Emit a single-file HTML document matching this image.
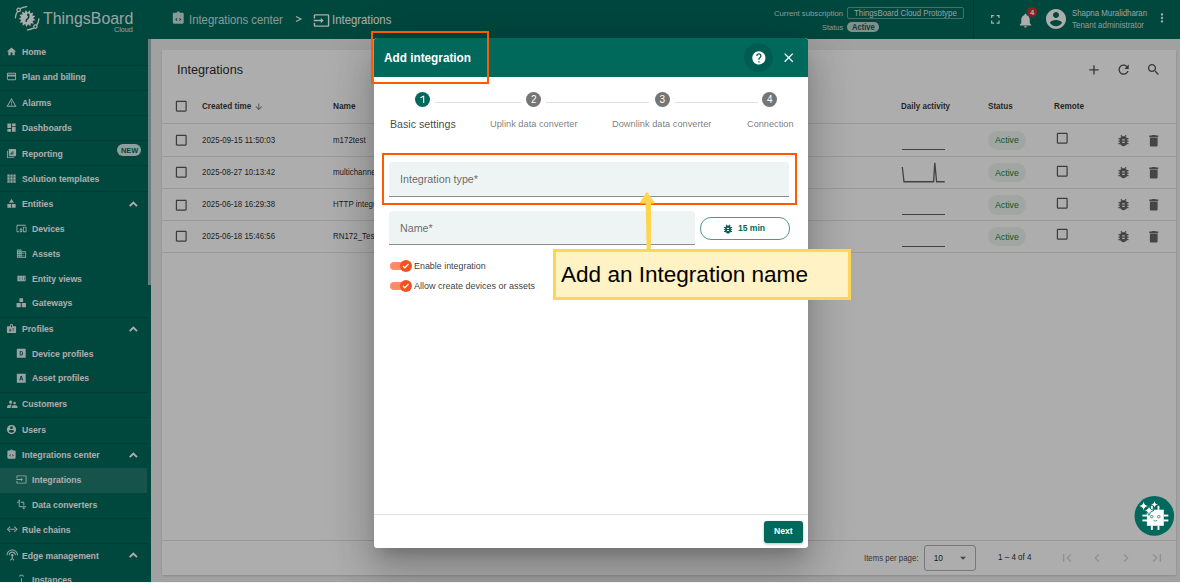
<!DOCTYPE html>
<html><head><meta charset="utf-8"><style>
html,body{margin:0;padding:0}
body{width:1180px;height:583px;overflow:hidden;position:relative;font-family:"Liberation Sans",sans-serif;background:#eee}
.t{position:absolute;white-space:nowrap;line-height:1}
.i{position:absolute;overflow:visible}
</style></head><body>
<div style="position:absolute;left:0;top:0;width:1180px;height:38.5px;background:#00695c"></div>
<svg class="i" style="left:12px;top:3px;width:32px;height:32px" viewBox="12 3 32 32"><g fill="none" stroke="#fff" stroke-width="1.3" stroke-linecap="round"><path d="M15.4 17.8 Q15.8 13.5 17.6 11.4"/><circle cx="18.7" cy="9.9" r="1.7"/><path d="M20.3 8.5 Q23 7 26.8 6.6"/><path d="M38.9 18.9 Q38.5 23 36.6 25.1"/><circle cx="35.4" cy="26.6" r="1.7"/><path d="M33.6 28.2 Q30.5 29.6 27.4 29.9"/></g><path fill="#fff" d="M35.53,20.11 L32.52,20.96 L33.77,23.83 L30.71,23.19 L30.48,26.31 L28.07,24.32 L26.42,26.97 L25.21,24.09 L22.51,25.67 L22.78,22.56 L19.66,22.71 L21.34,20.08 L18.51,18.76 L21.22,17.21 L19.33,14.72 L22.45,14.61 L21.92,11.53 L24.74,12.88 L25.71,9.91 L27.57,12.42 L29.81,10.24 L30.30,13.32 L33.29,12.43 L32.29,15.39 L35.36,16.00 L33.09,18.15Z"/><circle cx="28.3" cy="14.9" r="1.3" fill="#00695c"/><path d="M28.4 15.5 Q29.5 17.5 27.5 18.8 Q25.6 20 26.3 22" fill="none" stroke="#00695c" stroke-width="1.4"/></svg>
<div class="t" style="left:42.70px;top:11.00px;font-size:16.60px;color:rgba(255,255,255,.92);font-weight:normal;transform:scaleX(0.9595);transform-origin:0 0;">ThingsBoard</div>
<div class="t" style="left:114.20px;top:26.00px;font-size:7.60px;color:rgba(255,255,255,.9);font-weight:normal;transform:scaleX(0.9468);transform-origin:0 0;">Cloud</div>
<svg class="i" style="left:171.20px;top:11.30px;width:14.50px;height:14.50px;" viewBox="0 0 24 24"><path fill="rgba(255,255,255,.8)" d="M19 3h-4.18C14.4 1.84 13.3 1 12 1s-2.4.84-2.82 2H5c-1.1 0-2 .9-2 2v14c0 1.1.9 2 2 2h14c1.1 0 2-.9 2-2V5c0-1.1-.9-2-2-2zM9.5 16.5L7 14l2.5-2.5 1.06 1.06L9.12 14l1.44 1.44L9.5 16.5zm5 0l-1.06-1.06L14.88 14l-1.44-1.44L14.5 11.5 17 14l-2.5 2.5z"/></svg>
<div class="t" style="left:189.00px;top:15.00px;font-size:11.90px;color:rgba(255,255,255,.82);font-weight:normal;transform:scaleX(0.9528);transform-origin:0 0;">Integrations center</div>
<svg class="i" style="left:295px;top:16px;width:7px;height:6px" viewBox="0 0 7 6"><path d="M1 0.6 L6 3 L1 5.4" fill="none" stroke="#fff" stroke-width="1.1"/></svg>
<svg class="i" style="left:312.80px;top:11.60px;width:17.00px;height:17.00px;" viewBox="0 0 24 24"><path fill="#fff" d="M21 3.01H3c-1.1 0-2 .9-2 2V9h2V4.99h18v14.03H3V15H1v4.01c0 1.1.9 1.98 2 1.98h18c1.1 0 2-.88 2-1.98v-14c0-1.11-.9-2-2-2zM11 16l4-4-4-4v3H1v2h10v3z"/></svg>
<div class="t" style="left:332.00px;top:15.00px;font-size:11.90px;color:#fff;font-weight:normal;transform:scaleX(0.9553);transform-origin:0 0;">Integrations</div>
<div class="t" style="left:774.00px;top:10.00px;font-size:8.00px;color:rgba(255,255,255,.82);font-weight:normal;transform:scaleX(0.9639);transform-origin:0 0;">Current subscription</div>
<div style="position:absolute;left:847px;top:7px;width:114.8px;height:10.2px;border:1px solid rgba(255,255,255,.4);border-radius:2px"></div>
<div class="t" style="left:854.10px;top:10.00px;font-size:8.20px;color:rgba(255,255,255,.88);font-weight:normal;transform:scaleX(0.9566);transform-origin:0 0;">ThingsBoard Cloud Prototype</div>
<div class="t" style="left:821.50px;top:24.00px;font-size:8.00px;color:rgba(255,255,255,.82);font-weight:normal;transform:scaleX(0.9304);transform-origin:0 0;">Status</div>
<div style="position:absolute;left:847px;top:22.4px;width:31.8px;height:9.6px;border-radius:4.8px;background:rgba(255,255,255,.72)"></div>
<div class="t" style="left:851.60px;top:24.00px;font-size:8.20px;color:#24544d;font-weight:bold;transform:scaleX(0.9264);transform-origin:0 0;">Active</div>
<div style="position:absolute;left:973.3px;top:0;width:1px;height:38.5px;background:rgba(0,0,0,.15)"></div>
<svg class="i" style="left:987.50px;top:12.30px;width:14.70px;height:14.70px;" viewBox="0 0 24 24"><path fill="#fff" d="M7 14H5v5h5v-2H7v-3zm-2-4h2V7h3V5H5v5zm12 7h-3v2h5v-5h-2v3zM14 5v2h3v3h2V5h-5z"/></svg>
<svg class="i" style="left:1016.50px;top:11.50px;width:17.00px;height:17.00px;" viewBox="0 0 24 24"><path fill="#fff" d="M12 22c1.1 0 2-.9 2-2h-4c0 1.1.89 2 2 2zm6-6v-5c0-3.07-1.64-5.64-4.5-6.32V4c0-.83-.67-1.5-1.5-1.5s-1.5.67-1.5 1.5v.68C7.63 5.36 6 7.92 6 11v5l-2 2v1h16v-1l-2-2z"/></svg>
<div style="position:absolute;left:1027.4px;top:7.1px;width:9.6px;height:9.6px;border-radius:50%;background:#d32f2f"></div>
<div class="t" style="left:1030.30px;top:9.00px;font-size:7.20px;color:#fff;font-weight:bold;">4</div>
<svg class="i" style="left:1043.70px;top:7.10px;width:24.00px;height:24.00px;" viewBox="0 0 24 24"><path fill="#fff" d="M12 2C6.48 2 2 6.48 2 12s4.48 10 10 10 10-4.48 10-10S17.52 2 12 2zm0 3c1.66 0 3 1.34 3 3s-1.34 3-3 3-3-1.34-3-3 1.34-3 3-3zm0 14.2c-2.5 0-4.71-1.28-6-3.22.03-1.99 4-3.08 6-3.08 1.99 0 5.97 1.09 6 3.08-1.29 1.94-3.5 3.22-6 3.22z"/></svg>
<div class="t" style="left:1071.80px;top:10.00px;font-size:8.20px;color:rgba(255,255,255,.9);font-weight:normal;transform:scaleX(0.9592);transform-origin:0 0;">Shapna Muralidharan</div>
<div class="t" style="left:1072.30px;top:22.00px;font-size:8.20px;color:rgba(255,255,255,.82);font-weight:normal;transform:scaleX(0.9706);transform-origin:0 0;">Tenant administrator</div>
<svg class="i" style="left:1154.80px;top:11.30px;width:14.00px;height:14.00px;" viewBox="0 0 24 24"><path fill="#fff" d="M12 8c1.1 0 2-.9 2-2s-.9-2-2-2-2 .9-2 2 .9 2 2 2zm0 2c-1.1 0-2 .9-2 2s.9 2 2 2 2-.9 2-2-.9-2-2-2zm0 6c-1.1 0-2 .9-2 2s.9 2 2 2 2-.9 2-2-.9-2-2-2z"/></svg>
<div style="position:absolute;left:0;top:38.5px;width:151px;height:545px;background:#00695c"></div>
<div style="position:absolute;left:147.5px;top:38.5px;width:3.5px;height:246px;background:rgb(157,187,181)"></div>
<svg class="i" style="left:6.30px;top:46.20px;width:11.00px;height:11.00px;" viewBox="0 0 24 24"><path fill="rgba(255,255,255,.9)" d="M10 20v-6h4v6h5v-8h3L12 3 2 12h3v8z"/></svg>
<div class="t" style="left:22.30px;top:47.00px;font-size:9.50px;color:#fff;font-weight:bold;transform:scaleX(0.9089);transform-origin:0 0;">Home</div>
<div style="position:absolute;left:0;top:64.50px;width:147.5px;height:1px;background:rgba(0,0,0,.14)"></div>
<svg class="i" style="left:6.30px;top:71.20px;width:11.00px;height:11.00px;" viewBox="0 0 24 24"><path fill="rgba(255,255,255,.9)" d="M20 4H4c-1.11 0-1.99.89-1.99 2L2 18c0 1.11.89 2 2 2h16c1.11 0 2-.89 2-2V6c0-1.11-.89-2-2-2zm0 14H4v-6h16v6zm0-10H4V6h16v2z"/></svg>
<div class="t" style="left:22.30px;top:72.00px;font-size:9.50px;color:#fff;font-weight:bold;transform:scaleX(0.9089);transform-origin:0 0;">Plan and billing</div>
<div style="position:absolute;left:0;top:89.70px;width:147.5px;height:1px;background:rgba(0,0,0,.14)"></div>
<svg class="i" style="left:6.30px;top:96.80px;width:11.00px;height:11.00px;" viewBox="0 0 24 24"><path fill="rgba(255,255,255,.9)" d="M12 5.99L19.53 19H4.47L12 5.99M12 2L1 21h22L12 2zm1 14h-2v2h2v-2zm0-6h-2v4h2v-4z"/></svg>
<div class="t" style="left:22.30px;top:98.00px;font-size:9.50px;color:#fff;font-weight:bold;transform:scaleX(0.9089);transform-origin:0 0;">Alarms</div>
<div style="position:absolute;left:0;top:114.90px;width:147.5px;height:1px;background:rgba(0,0,0,.14)"></div>
<svg class="i" style="left:6.30px;top:122.00px;width:11.00px;height:11.00px;" viewBox="0 0 24 24"><path fill="rgba(255,255,255,.9)" d="M3 13h8V3H3v10zm0 8h8v-6H3v6zm10 0h8V11h-8v10zm0-18v6h8V3h-8z"/></svg>
<div class="t" style="left:22.30px;top:123.00px;font-size:9.50px;color:#fff;font-weight:bold;transform:scaleX(0.9089);transform-origin:0 0;">Dashboards</div>
<div style="position:absolute;left:0;top:140.10px;width:147.5px;height:1px;background:rgba(0,0,0,.14)"></div>
<svg class="i" style="left:6.30px;top:147.80px;width:11.00px;height:11.00px;" viewBox="0 0 24 24"><path fill="rgba(255,255,255,.9)" fill-rule="evenodd" d="M4 6H2v14c0 1.1.9 2 2 2h14v-2H4V6zM20 2H8c-1.1 0-2 .9-2 2v12c0 1.1.9 2 2 2h12c1.1 0 2-.9 2-2V4c0-1.1-.9-2-2-2zM14 7h2v7h-2zM11 10h2v4h-2zM8 12h2v2H8z"/></svg>
<div class="t" style="left:22.30px;top:149.00px;font-size:9.50px;color:#fff;font-weight:bold;transform:scaleX(0.9089);transform-origin:0 0;">Reporting</div>
<div style="position:absolute;left:117px;top:143.9px;width:24.3px;height:12.6px;border-radius:6.3px;background:rgba(255,255,255,.85)"></div>
<div class="t" style="left:120.50px;top:147.00px;font-size:7.60px;color:#00695c;font-weight:bold;transform:scaleX(0.9700);transform-origin:0 0;">NEW</div>
<div style="position:absolute;left:0;top:165.30px;width:147.5px;height:1px;background:rgba(0,0,0,.14)"></div>
<svg class="i" style="left:6.30px;top:173.00px;width:11.00px;height:11.00px;" viewBox="0 0 24 24"><path fill="rgba(255,255,255,.9)" d="M3 3h5v5H3zM9.5 3h5v5h-5zM16 3h5v5h-5zM3 9.5h5v5H3zM9.5 9.5h5v5h-5zM16 9.5h5v5h-5zM3 16h5v5H3zM9.5 16h5v5h-5zM16 16h5v5h-5z"/></svg>
<div class="t" style="left:22.30px;top:174.00px;font-size:9.50px;color:#fff;font-weight:bold;transform:scaleX(0.9089);transform-origin:0 0;">Solution templates</div>
<div style="position:absolute;left:0;top:190.50px;width:147.5px;height:1px;background:rgba(0,0,0,.14)"></div>
<svg class="i" style="left:6.30px;top:198.40px;width:11.00px;height:11.00px;" viewBox="0 0 24 24"><path fill="rgba(255,255,255,.9)" d="M12 2l-5.5 8.5h11zM3 13h8.2v8H3zM12.8 13H21v8h-8.2z"/></svg>
<div class="t" style="left:22.30px;top:199.00px;font-size:9.50px;color:#fff;font-weight:bold;transform:scaleX(0.9089);transform-origin:0 0;">Entities</div>
<svg class="i" style="left:125px;top:195.90px;width:16px;height:16px" viewBox="0 0 16 16"><path d="M4.7 10.2 L8.35 6.5 L12 10.2" fill="none" stroke="#fff" stroke-width="1.9"/></svg>
<svg class="i" style="left:15.80px;top:223.20px;width:11.00px;height:11.00px;" viewBox="0 0 24 24"><path fill="rgba(255,255,255,.9)" d="M3 6h18V4H3c-1.1 0-2 .9-2 2v12c0 1.1.9 2 2 2h4v-2H3V6zm10 6H9v1.78c-.61.55-1 1.33-1 2.22s.39 1.67 1 2.22V20h4v-1.78c.61-.55 1-1.34 1-2.22s-.39-1.67-1-2.22V12zm-2 5.5c-.83 0-1.5-.67-1.5-1.5s.67-1.5 1.5-1.5 1.5.67 1.5 1.5-.67 1.5-1.5 1.5zM22 8h-6c-.5 0-1 .5-1 1v10c0 .5.5 1 1 1h6c.5 0 1-.5 1-1V9c0-.5-.5-1-1-1zm-1 10h-4v-8h4v8z"/></svg>
<div class="t" style="left:32.00px;top:224.00px;font-size:9.50px;color:#fff;font-weight:bold;transform:scaleX(0.9089);transform-origin:0 0;">Devices</div>
<svg class="i" style="left:15.80px;top:248.00px;width:11.00px;height:11.00px;" viewBox="0 0 24 24"><path fill="rgba(255,255,255,.9)" d="M12 7V3H2v18h20V7H12zM6 19H4v-2h2v2zm0-4H4v-2h2v2zm0-4H4V9h2v2zm0-4H4V5h2v2zm4 12H8v-2h2v2zm0-4H8v-2h2v2zm0-4H8V9h2v2zm0-4H8V5h2v2zm10 12h-8v-2h2v-2h-2v-2h2v-2h-2V9h8v10zm-2-8h-2v2h2v-2zm0 4h-2v2h2v-2z"/></svg>
<div class="t" style="left:32.00px;top:249.00px;font-size:9.50px;color:#fff;font-weight:bold;transform:scaleX(0.9089);transform-origin:0 0;">Assets</div>
<svg class="i" style="left:15.80px;top:273.00px;width:11.00px;height:11.00px;" viewBox="0 0 24 24"><path fill="rgba(255,255,255,.9)" d="M3 6h18v12H3zM8 8v8h1V8zm5 0v8h1V8zm5 0v8h1V8z"/></svg>
<div class="t" style="left:32.00px;top:274.00px;font-size:9.50px;color:#fff;font-weight:bold;transform:scaleX(0.9089);transform-origin:0 0;">Entity views</div>
<svg class="i" style="left:15.05px;top:296.85px;width:12.50px;height:12.50px;" viewBox="0 0 24 24"><path fill="rgba(255,255,255,.9)" d="M8.5 2.5h7v7h-7zM3 11.5h8v8H3zM13 11.5h8v8h-8z"/></svg>
<div class="t" style="left:32.00px;top:298.00px;font-size:9.50px;color:#fff;font-weight:bold;transform:scaleX(0.9089);transform-origin:0 0;">Gateways</div>
<div style="position:absolute;left:0;top:316.50px;width:147.5px;height:1px;background:rgba(0,0,0,.14)"></div>
<svg class="i" style="left:6.30px;top:323.00px;width:11.00px;height:11.00px;" viewBox="0 0 24 24"><path fill="rgba(255,255,255,.9)" d="M20 7h-5V4c0-1.1-.9-2-2-2h-2c-1.1 0-2 .9-2 2v3H4c-1.1 0-2 .9-2 2v11c0 1.1.9 2 2 2h16c1.1 0 2-.9 2-2V9c0-1.1-.9-2-2-2zM9 12c.83 0 1.5.67 1.5 1.5S9.83 15 9 15s-1.5-.67-1.5-1.5S8.17 12 9 12zm3 6H6v-.75c0-1 2-1.5 3-1.5s3 .5 3 1.5V18zm1-9h-2V4h2v5zm5 7.5h-4V15h4v1.5zm0-3h-4V12h4v1.5z"/></svg>
<div class="t" style="left:22.30px;top:324.00px;font-size:9.50px;color:#fff;font-weight:bold;transform:scaleX(0.9089);transform-origin:0 0;">Profiles</div>
<svg class="i" style="left:125px;top:320.50px;width:16px;height:16px" viewBox="0 0 16 16"><path d="M4.7 10.2 L8.35 6.5 L12 10.2" fill="none" stroke="#fff" stroke-width="1.9"/></svg>
<svg class="i" style="left:15.05px;top:347.25px;width:12.50px;height:12.50px;" viewBox="0 0 24 24"><path fill="rgba(255,255,255,.9)" fill-rule="evenodd" d="M3.5 3.5h17v17h-17zM9 7.5v9h2.8c2.2 0 3.4-1.8 3.4-4.5S14 7.5 11.8 7.5zM10.8 9.2h1c1 0 1.6.9 1.6 2.8s-.6 2.8-1.6 2.8h-1z"/></svg>
<div class="t" style="left:32.00px;top:349.00px;font-size:9.50px;color:#fff;font-weight:bold;transform:scaleX(0.9089);transform-origin:0 0;">Device profiles</div>
<svg class="i" style="left:15.05px;top:371.85px;width:12.50px;height:12.50px;" viewBox="0 0 24 24"><path fill="rgba(255,255,255,.9)" fill-rule="evenodd" d="M3.5 3.5h17v17h-17zM10.6 7.5L8.2 16.5h1.9l.5-2h2.8l.5 2h1.9L13.4 7.5zM12 9.6l1 3.3h-2z"/></svg>
<div class="t" style="left:32.00px;top:373.00px;font-size:9.50px;color:#fff;font-weight:bold;transform:scaleX(0.9089);transform-origin:0 0;">Asset profiles</div>
<div style="position:absolute;left:0;top:392.10px;width:147.5px;height:1px;background:rgba(0,0,0,.14)"></div>
<svg class="i" style="left:5.55px;top:397.55px;width:12.50px;height:12.50px;" viewBox="0 0 24 24"><path fill="rgba(255,255,255,.9)" d="M16.5 12c1.38 0 2.49-1.12 2.49-2.5S17.88 7 16.5 7C15.12 7 14 8.12 14 9.5s1.12 2.5 2.5 2.5zM9 11c1.66 0 2.99-1.34 2.99-3S10.66 5 9 5C7.34 5 6 6.34 6 8s1.34 3 3 3zm7.5 3c-1.83 0-5.5.92-5.5 2.75V19h11v-2.25c0-1.83-3.67-2.75-5.5-2.75zM9 13c-2.33 0-7 1.17-7 3.5V19h7v-2.25c0-.85.33-2.34 2.37-3.47C10.5 13.1 9.66 13 9 13z"/></svg>
<div class="t" style="left:22.30px;top:399.00px;font-size:9.50px;color:#fff;font-weight:bold;transform:scaleX(0.9089);transform-origin:0 0;">Customers</div>
<div style="position:absolute;left:0;top:417.30px;width:147.5px;height:1px;background:rgba(0,0,0,.14)"></div>
<svg class="i" style="left:6.30px;top:424.00px;width:11.00px;height:11.00px;" viewBox="0 0 24 24"><path fill="rgba(255,255,255,.9)" d="M12 2C6.48 2 2 6.48 2 12s4.48 10 10 10 10-4.48 10-10S17.52 2 12 2zm0 3c1.66 0 3 1.34 3 3s-1.34 3-3 3-3-1.34-3-3 1.34-3 3-3zm0 14.2c-2.5 0-4.71-1.28-6-3.22.03-1.99 4-3.08 6-3.08 1.99 0 5.97 1.09 6 3.08-1.29 1.94-3.5 3.22-6 3.22z"/></svg>
<div class="t" style="left:22.30px;top:425.00px;font-size:9.50px;color:#fff;font-weight:bold;transform:scaleX(0.9089);transform-origin:0 0;">Users</div>
<div style="position:absolute;left:0;top:442.50px;width:147.5px;height:1px;background:rgba(0,0,0,.14)"></div>
<svg class="i" style="left:6.30px;top:449.20px;width:11.00px;height:11.00px;" viewBox="0 0 24 24"><path fill="rgba(255,255,255,.9)" d="M19 3h-4.18C14.4 1.84 13.3 1 12 1s-2.4.84-2.82 2H5c-1.1 0-2 .9-2 2v14c0 1.1.9 2 2 2h14c1.1 0 2-.9 2-2V5c0-1.1-.9-2-2-2zM9.5 16.5L7 14l2.5-2.5 1.06 1.06L9.12 14l1.44 1.44L9.5 16.5zm5 0l-1.06-1.06L14.88 14l-1.44-1.44L14.5 11.5 17 14l-2.5 2.5z"/></svg>
<div class="t" style="left:22.30px;top:450.00px;font-size:9.50px;color:#fff;font-weight:bold;transform:scaleX(0.9089);transform-origin:0 0;">Integrations center</div>
<svg class="i" style="left:125px;top:446.70px;width:16px;height:16px" viewBox="0 0 16 16"><path d="M4.7 10.2 L8.35 6.5 L12 10.2" fill="none" stroke="#fff" stroke-width="1.9"/></svg>
<div style="position:absolute;left:0;top:468.2px;width:147.4px;height:24.5px;background:rgba(255,255,255,.12)"></div>
<svg class="i" style="left:15.80px;top:474.20px;width:11.00px;height:11.00px;" viewBox="0 0 24 24"><path fill="rgba(255,255,255,.9)" d="M21 3.01H3c-1.1 0-2 .9-2 2V9h2V4.99h18v14.03H3V15H1v4.01c0 1.1.9 1.98 2 1.98h18c1.1 0 2-.88 2-1.98v-14c0-1.11-.9-2-2-2zM11 16l4-4-4-4v3H1v2h10v3z"/></svg>
<div class="t" style="left:32.00px;top:475.00px;font-size:9.50px;color:#fff;font-weight:bold;transform:scaleX(0.9089);transform-origin:0 0;">Integrations</div>
<svg class="i" style="left:15.80px;top:498.70px;width:11.00px;height:11.00px;" viewBox="0 0 24 24"><path fill="rgba(255,255,255,.9)" d="M22 18v-2H8V4h2L7 1 4 4h2v2H2v2h4v8c0 1.1.9 2 2 2h8v2h-2l3 3 3-3h-2v-2h4zM10 8h6v6h2V8c0-1.1-.9-2-2-2h-6v2z"/></svg>
<div class="t" style="left:32.00px;top:500.00px;font-size:9.50px;color:#fff;font-weight:bold;transform:scaleX(0.9089);transform-origin:0 0;">Data converters</div>
<div style="position:absolute;left:0;top:518.10px;width:147.5px;height:1px;background:rgba(0,0,0,.14)"></div>
<svg class="i" style="left:5.55px;top:523.45px;width:12.50px;height:12.50px;" viewBox="0 0 24 24"><path fill="rgba(255,255,255,.9)" d="M7.3 6.3L1.6 12l5.7 5.7 1.4-1.4L4.4 12l4.3-4.3zM16.7 6.3l-1.4 1.4 4.3 4.3-4.3 4.3 1.4 1.4 5.7-5.7zM6.5 11h11v2h-11z"/></svg>
<div class="t" style="left:22.30px;top:525.00px;font-size:9.50px;color:#fff;font-weight:bold;transform:scaleX(0.9089);transform-origin:0 0;">Rule chains</div>
<div style="position:absolute;left:0;top:543.30px;width:147.5px;height:1px;background:rgba(0,0,0,.14)"></div>
<svg class="i" style="left:5.55px;top:549.05px;width:12.50px;height:12.50px;" viewBox="0 0 24 24"><path fill="rgba(255,255,255,.9)" d="M12 5c-3.87 0-7 3.13-7 7h2c0-2.76 2.24-5 5-5s5 2.24 5 5h2c0-3.87-3.13-7-7-7zm1 9.29c.88-.39 1.5-1.26 1.5-2.29 0-1.38-1.12-2.5-2.5-2.5S9.5 10.62 9.5 12c0 1.02.62 1.9 1.5 2.29v3.3L7.59 21 9 22.41l3-3 3 3L16.41 21 13 17.59v-3.3zM12 1C5.93 1 1 5.93 1 12h2c0-4.97 4.03-9 9-9s9 4.03 9 9h2c0-6.07-4.93-11-11-11z"/></svg>
<div class="t" style="left:22.30px;top:551.00px;font-size:9.50px;color:#fff;font-weight:bold;transform:scaleX(0.9089);transform-origin:0 0;">Edge management</div>
<svg class="i" style="left:125px;top:547.30px;width:16px;height:16px" viewBox="0 0 16 16"><path d="M4.7 10.2 L8.35 6.5 L12 10.2" fill="none" stroke="#fff" stroke-width="1.9"/></svg>
<svg class="i" style="left:15.80px;top:574.20px;width:11.00px;height:11.00px;" viewBox="0 0 24 24"><path fill="rgba(255,255,255,.9)" d="M11 9h2v12h-2zM5 21h14v2H5zM7 6a5 5 0 0 1 10 0h-2a3 3 0 0 0-6 0z"/></svg>
<div class="t" style="left:32.00px;top:575.00px;font-size:9.50px;color:#fff;font-weight:bold;transform:scaleX(0.9089);transform-origin:0 0;">Instances</div>
<div style="position:absolute;left:151px;top:38.5px;width:1029px;height:545px;background:#eeeeee"></div>
<div style="position:absolute;left:162.2px;top:50.1px;width:1013.7px;height:525.4px;background:#fff;box-shadow:0 1px 2px rgba(0,0,0,.15)"></div>
<div class="t" style="left:177.00px;top:64.00px;font-size:12.85px;color:rgba(0,0,0,.87);font-weight:normal;transform:scaleX(0.9830);transform-origin:0 0;">Integrations</div>
<svg class="i" style="left:1086.10px;top:61.70px;width:15.90px;height:15.90px;" viewBox="0 0 24 24"><path fill="rgba(0,0,0,.68)" d="M19 13h-6v6h-2v-6H5v-2h6V5h2v6h6v2z"/></svg>
<svg class="i" style="left:1116.35px;top:62.30px;width:15.30px;height:15.30px;" viewBox="0 0 24 24"><path fill="rgba(0,0,0,.68)" d="M17.65 6.35C16.2 4.9 14.21 4 12 4c-4.42 0-7.99 3.58-7.99 8s3.57 8 7.99 8c3.73 0 6.84-2.550 7.73-6h-2.08c-.82 2.33-3.04 4-5.65 4-3.310 0-6-2.69-6-6s2.69-6 6-6c1.66 0 3.14.69 4.22 1.78L13 11h7V4l-2.35 2.35z"/></svg>
<svg class="i" style="left:1146.10px;top:62.20px;width:15.10px;height:15.10px;" viewBox="0 0 24 24"><path fill="rgba(0,0,0,.68)" d="M15.5 14h-.79l-.28-.27C15.41 12.59 16 11.11 16 9.5 16 5.91 13.09 3 9.5 3S3 5.91 3 9.5 5.91 16 9.5 16c1.61 0 3.09-.59 4.23-1.57l.27.28v.79l5 4.99L20.49 19l-4.99-5zm-6 0C7.010 14 5 11.99 5 9.5S7.01 5 9.5 5 14 7.01 14 9.5 11.99 14 9.5 14z"/></svg>
<svg class="i" style="left:174.45px;top:99.25px;width:14.50px;height:14.50px;" viewBox="0 0 24 24"><path fill="rgba(0,0,0,.65)" d="M19 5v14H5V5h14m0-2H5c-1.1 0-2 .9-2 2v14c0 1.1.9 2 2 2h14c1.1 0 2-.9 2-2V5c0-1.1-.9-2-2-2z"/></svg>
<div class="t" style="left:201.90px;top:102.00px;font-size:9.30px;color:rgba(0,0,0,.82);font-weight:bold;transform:scaleX(0.8734);transform-origin:0 0;">Created time</div>
<svg class="i" style="left:254.20px;top:102.40px;width:9.60px;height:9.60px;" viewBox="0 0 24 24"><path fill="rgba(0,0,0,.6)" d="M20 12l-1.41-1.41L13 16.17V4h-2v12.170l-5.58-5.59L4 12l8 8 8-8z"/></svg>
<div class="t" style="left:332.60px;top:102.00px;font-size:9.30px;color:rgba(0,0,0,.82);font-weight:bold;transform:scaleX(0.8922);transform-origin:0 0;">Name</div>
<div class="t" style="left:900.80px;top:102.00px;font-size:9.30px;color:rgba(0,0,0,.82);font-weight:bold;transform:scaleX(0.8636);transform-origin:0 0;">Daily activity</div>
<div class="t" style="left:987.80px;top:102.00px;font-size:9.30px;color:rgba(0,0,0,.82);font-weight:bold;transform:scaleX(0.8726);transform-origin:0 0;">Status</div>
<div class="t" style="left:1054.40px;top:102.00px;font-size:9.30px;color:rgba(0,0,0,.82);font-weight:bold;transform:scaleX(0.8796);transform-origin:0 0;">Remote</div>
<div style="position:absolute;left:162.2px;top:122.90px;width:1013.7px;height:1px;background:rgba(0,0,0,.1)"></div>
<div style="position:absolute;left:162.2px;top:155.70px;width:1013.7px;height:1px;background:rgba(0,0,0,.1)"></div>
<div style="position:absolute;left:162.2px;top:187.80px;width:1013.7px;height:1px;background:rgba(0,0,0,.1)"></div>
<div style="position:absolute;left:162.2px;top:219.80px;width:1013.7px;height:1px;background:rgba(0,0,0,.1)"></div>
<div style="position:absolute;left:162.2px;top:251.60px;width:1013.7px;height:1px;background:rgba(0,0,0,.1)"></div>
<svg class="i" style="left:174.30px;top:133.00px;width:14.50px;height:14.50px;" viewBox="0 0 24 24"><path fill="rgba(0,0,0,.65)" d="M19 5v14H5V5h14m0-2H5c-1.1 0-2 .9-2 2v14c0 1.1.9 2 2 2h14c1.1 0 2-.9 2-2V5c0-1.1-.9-2-2-2z"/></svg>
<div class="t" style="left:201.90px;top:136.00px;font-size:8.60px;color:rgba(0,0,0,.87);font-weight:normal;transform:scaleX(0.9229);transform-origin:0 0;">2025-09-15 11:50:03</div>
<div class="t" style="left:332.60px;top:136.00px;font-size:8.60px;color:rgba(0,0,0,.87);font-weight:normal;transform:scaleX(0.9229);transform-origin:0 0;">m172test</div>
<div style="position:absolute;left:902.3px;top:149.15px;width:42.4px;height:1.3px;background:rgba(0,0,0,.62)"></div>
<div style="position:absolute;left:988px;top:130.50px;width:38.4px;height:19.5px;border-radius:9.75px;background:rgba(25,128,56,.08)"></div>
<div class="t" style="left:995.10px;top:135.00px;font-size:9.60px;color:#198038;font-weight:normal;transform:scaleX(0.9142);transform-origin:0 0;">Active</div>
<svg class="i" style="left:1054.75px;top:131.05px;width:14.50px;height:14.50px;" viewBox="0 0 24 24"><path fill="rgba(0,0,0,.65)" d="M19 5v14H5V5h14m0-2H5c-1.1 0-2 .9-2 2v14c0 1.1.9 2 2 2h14c1.1 0 2-.9 2-2V5c0-1.1-.9-2-2-2z"/></svg>
<svg class="i" style="left:1116.40px;top:132.70px;width:15.00px;height:15.00px;" viewBox="0 0 24 24"><path fill="rgba(0,0,0,.6)" d="M20 8h-2.81c-.45-.78-1.07-1.45-1.82-1.96L17 4.41 15.590 3l-2.17 2.17C12.96 5.06 12.49 5 12 5c-.49 0-.96.06-1.41.17L8.41 3 7 4.41l1.62 1.63C7.88 6.55 7.26 7.22 6.81 8H4v2h2.09c-.05.33-.09.66-.09 1v1H4v2h2v1c0 .34.04.67.09 1H4v2h2.81c1.04 1.79 2.97 3 5.19 3s4.15-1.21 5.19-3H20v-2h-2.09c.05-.33.09-.66.09-1v-1h2v-2h-2v-1c0-.34-.04-.67-.09-1H20V8zm-6 8h-4v-2h4v2zm0-4h-4v-2h4v2z"/></svg>
<svg class="i" style="left:1145.50px;top:132.70px;width:15.50px;height:15.50px;" viewBox="0 0 24 24"><path fill="rgba(0,0,0,.6)" d="M6 19c0 1.1.9 2 2 2h8c1.1 0 2-.9 2-2V7H6v12zM19 4h-3.5l-1-1h-5l-1 1H5v2h14V4z"/></svg>
<svg class="i" style="left:174.30px;top:165.45px;width:14.50px;height:14.50px;" viewBox="0 0 24 24"><path fill="rgba(0,0,0,.65)" d="M19 5v14H5V5h14m0-2H5c-1.1 0-2 .9-2 2v14c0 1.1.9 2 2 2h14c1.1 0 2-.9 2-2V5c0-1.1-.9-2-2-2z"/></svg>
<div class="t" style="left:201.90px;top:168.00px;font-size:8.60px;color:rgba(0,0,0,.87);font-weight:normal;transform:scaleX(0.9155);transform-origin:0 0;">2025-08-27 10:13:42</div>
<div class="t" style="left:332.60px;top:168.00px;font-size:8.60px;color:rgba(0,0,0,.87);font-weight:normal;transform:scaleX(0.9229);transform-origin:0 0;">multichannel</div>
<svg class="i" style="left:895px;top:157.25px;width:60px;height:30px" viewBox="895 157.25 60 30"><path d="M902.3 167.25 L904 182.00 L933.6 182.00 L934.8 163.05 L936.6 182.00 L944.7 182.00" fill="none" stroke="rgba(0,0,0,.62)" stroke-width="1.3" stroke-linejoin="miter"/></svg>
<div style="position:absolute;left:988px;top:162.95px;width:38.4px;height:19.5px;border-radius:9.75px;background:rgba(25,128,56,.08)"></div>
<div class="t" style="left:995.10px;top:168.00px;font-size:9.60px;color:#198038;font-weight:normal;transform:scaleX(0.9142);transform-origin:0 0;">Active</div>
<svg class="i" style="left:1054.75px;top:163.50px;width:14.50px;height:14.50px;" viewBox="0 0 24 24"><path fill="rgba(0,0,0,.65)" d="M19 5v14H5V5h14m0-2H5c-1.1 0-2 .9-2 2v14c0 1.1.9 2 2 2h14c1.1 0 2-.9 2-2V5c0-1.1-.9-2-2-2z"/></svg>
<svg class="i" style="left:1116.40px;top:165.15px;width:15.00px;height:15.00px;" viewBox="0 0 24 24"><path fill="rgba(0,0,0,.6)" d="M20 8h-2.81c-.45-.78-1.07-1.45-1.82-1.96L17 4.41 15.590 3l-2.17 2.17C12.96 5.06 12.49 5 12 5c-.49 0-.96.06-1.41.17L8.41 3 7 4.41l1.62 1.63C7.88 6.55 7.26 7.22 6.81 8H4v2h2.09c-.05.33-.09.66-.09 1v1H4v2h2v1c0 .34.04.67.09 1H4v2h2.81c1.04 1.79 2.97 3 5.19 3s4.15-1.21 5.19-3H20v-2h-2.09c.05-.33.09-.66.09-1v-1h2v-2h-2v-1c0-.34-.04-.67-.09-1H20V8zm-6 8h-4v-2h4v2zm0-4h-4v-2h4v2z"/></svg>
<svg class="i" style="left:1145.50px;top:165.15px;width:15.50px;height:15.50px;" viewBox="0 0 24 24"><path fill="rgba(0,0,0,.6)" d="M6 19c0 1.1.9 2 2 2h8c1.1 0 2-.9 2-2V7H6v12zM19 4h-3.5l-1-1h-5l-1 1H5v2h14V4z"/></svg>
<svg class="i" style="left:174.30px;top:197.50px;width:14.50px;height:14.50px;" viewBox="0 0 24 24"><path fill="rgba(0,0,0,.65)" d="M19 5v14H5V5h14m0-2H5c-1.1 0-2 .9-2 2v14c0 1.1.9 2 2 2h14c1.1 0 2-.9 2-2V5c0-1.1-.9-2-2-2z"/></svg>
<div class="t" style="left:201.90px;top:200.00px;font-size:8.60px;color:rgba(0,0,0,.87);font-weight:normal;transform:scaleX(0.9155);transform-origin:0 0;">2025-06-18 16:29:38</div>
<div class="t" style="left:332.60px;top:200.00px;font-size:8.60px;color:rgba(0,0,0,.87);font-weight:normal;transform:scaleX(0.9229);transform-origin:0 0;">HTTP integration</div>
<div style="position:absolute;left:902.3px;top:213.65px;width:42.4px;height:1.3px;background:rgba(0,0,0,.62)"></div>
<div style="position:absolute;left:988px;top:195.00px;width:38.4px;height:19.5px;border-radius:9.75px;background:rgba(25,128,56,.08)"></div>
<div class="t" style="left:995.10px;top:200.00px;font-size:9.60px;color:#198038;font-weight:normal;transform:scaleX(0.9142);transform-origin:0 0;">Active</div>
<svg class="i" style="left:1054.75px;top:195.55px;width:14.50px;height:14.50px;" viewBox="0 0 24 24"><path fill="rgba(0,0,0,.65)" d="M19 5v14H5V5h14m0-2H5c-1.1 0-2 .9-2 2v14c0 1.1.9 2 2 2h14c1.1 0 2-.9 2-2V5c0-1.1-.9-2-2-2z"/></svg>
<svg class="i" style="left:1116.40px;top:197.20px;width:15.00px;height:15.00px;" viewBox="0 0 24 24"><path fill="rgba(0,0,0,.6)" d="M20 8h-2.81c-.45-.78-1.07-1.45-1.82-1.96L17 4.41 15.590 3l-2.17 2.17C12.96 5.06 12.49 5 12 5c-.49 0-.96.06-1.41.17L8.41 3 7 4.41l1.62 1.63C7.88 6.55 7.26 7.22 6.81 8H4v2h2.09c-.05.33-.09.66-.09 1v1H4v2h2v1c0 .34.04.67.09 1H4v2h2.81c1.04 1.79 2.97 3 5.19 3s4.15-1.21 5.19-3H20v-2h-2.09c.05-.33.09-.66.09-1v-1h2v-2h-2v-1c0-.34-.04-.67-.09-1H20V8zm-6 8h-4v-2h4v2zm0-4h-4v-2h4v2z"/></svg>
<svg class="i" style="left:1145.50px;top:197.20px;width:15.50px;height:15.50px;" viewBox="0 0 24 24"><path fill="rgba(0,0,0,.6)" d="M6 19c0 1.1.9 2 2 2h8c1.1 0 2-.9 2-2V7H6v12zM19 4h-3.5l-1-1h-5l-1 1H5v2h14V4z"/></svg>
<svg class="i" style="left:174.30px;top:229.40px;width:14.50px;height:14.50px;" viewBox="0 0 24 24"><path fill="rgba(0,0,0,.65)" d="M19 5v14H5V5h14m0-2H5c-1.1 0-2 .9-2 2v14c0 1.1.9 2 2 2h14c1.1 0 2-.9 2-2V5c0-1.1-.9-2-2-2z"/></svg>
<div class="t" style="left:201.90px;top:232.00px;font-size:8.60px;color:rgba(0,0,0,.87);font-weight:normal;transform:scaleX(0.9155);transform-origin:0 0;">2025-06-18 15:46:56</div>
<div class="t" style="left:332.60px;top:232.00px;font-size:8.60px;color:rgba(0,0,0,.87);font-weight:normal;transform:scaleX(0.9229);transform-origin:0 0;">RN172_Test</div>
<div style="position:absolute;left:902.3px;top:245.55px;width:42.4px;height:1.3px;background:rgba(0,0,0,.62)"></div>
<div style="position:absolute;left:988px;top:226.90px;width:38.4px;height:19.5px;border-radius:9.75px;background:rgba(25,128,56,.08)"></div>
<div class="t" style="left:995.10px;top:232.00px;font-size:9.60px;color:#198038;font-weight:normal;transform:scaleX(0.9142);transform-origin:0 0;">Active</div>
<svg class="i" style="left:1054.75px;top:227.45px;width:14.50px;height:14.50px;" viewBox="0 0 24 24"><path fill="rgba(0,0,0,.65)" d="M19 5v14H5V5h14m0-2H5c-1.1 0-2 .9-2 2v14c0 1.1.9 2 2 2h14c1.1 0 2-.9 2-2V5c0-1.1-.9-2-2-2z"/></svg>
<svg class="i" style="left:1116.40px;top:229.10px;width:15.00px;height:15.00px;" viewBox="0 0 24 24"><path fill="rgba(0,0,0,.6)" d="M20 8h-2.81c-.45-.78-1.07-1.45-1.82-1.96L17 4.41 15.590 3l-2.17 2.17C12.96 5.06 12.49 5 12 5c-.49 0-.96.06-1.41.17L8.41 3 7 4.41l1.62 1.63C7.88 6.55 7.26 7.22 6.81 8H4v2h2.09c-.05.33-.09.66-.09 1v1H4v2h2v1c0 .34.04.67.09 1H4v2h2.81c1.04 1.79 2.97 3 5.19 3s4.15-1.21 5.19-3H20v-2h-2.09c.05-.33.09-.66.09-1v-1h2v-2h-2v-1c0-.34-.04-.67-.09-1H20V8zm-6 8h-4v-2h4v2zm0-4h-4v-2h4v2z"/></svg>
<svg class="i" style="left:1145.50px;top:229.10px;width:15.50px;height:15.50px;" viewBox="0 0 24 24"><path fill="rgba(0,0,0,.6)" d="M6 19c0 1.1.9 2 2 2h8c1.1 0 2-.9 2-2V7H6v12zM19 4h-3.5l-1-1h-5l-1 1H5v2h14V4z"/></svg>
<div style="position:absolute;left:162.2px;top:540px;width:1013.7px;height:1px;background:rgba(0,0,0,.12)"></div>
<div class="t" style="left:863.90px;top:555.00px;font-size:8.20px;color:rgba(0,0,0,.75);font-weight:normal;transform:scaleX(0.9566);transform-origin:0 0;">Items per page:</div>
<div style="position:absolute;left:923.6px;top:545.2px;width:50.1px;height:23.4px;border:1px solid rgba(0,0,0,.3);border-radius:3px"></div>
<div class="t" style="left:933.70px;top:554.00px;font-size:8.40px;color:rgba(0,0,0,.87);font-weight:normal;">10</div>
<svg class="i" style="left:955.80px;top:550.50px;width:14.00px;height:14.00px;" viewBox="0 0 24 24"><path fill="rgba(0,0,0,.6)" d="M7 10l5 5 5-5z"/></svg>
<div class="t" style="left:998.00px;top:553.00px;font-size:8.40px;color:rgba(0,0,0,.87);font-weight:normal;transform:scaleX(0.9593);transform-origin:0 0;">1 – 4 of 4</div>
<svg class="i" style="left:1059.00px;top:549.50px;width:16.00px;height:16.00px;" viewBox="0 0 24 24"><path fill="rgba(0,0,0,.17)" d="M18.41 16.59L13.82 12l4.59-4.59L17 6l-6 6 6 6zM6 6h2v12H6z"/></svg>
<svg class="i" style="left:1088.50px;top:549.50px;width:16.00px;height:16.00px;" viewBox="0 0 24 24"><path fill="rgba(0,0,0,.17)" d="M15.41 7.41L14 6l-6 6 6 6 1.41-1.41L10.83 12z"/></svg>
<svg class="i" style="left:1118.00px;top:549.50px;width:16.00px;height:16.00px;" viewBox="0 0 24 24"><path fill="rgba(0,0,0,.17)" d="M10 6L8.59 7.41 13.17 12l-4.58 4.59L10 18l6-6z"/></svg>
<svg class="i" style="left:1148.50px;top:549.50px;width:16.00px;height:16.00px;" viewBox="0 0 24 24"><path fill="rgba(0,0,0,.17)" d="M5.59 7.41L10.18 12l-4.59 4.59L7 18l6-6-6-6zM16 6h2v12h-2z"/></svg>
<div style="position:absolute;left:0;top:0;width:1180px;height:583px;background:rgba(0,0,0,.32)"></div>
<div style="position:absolute;left:374.3px;top:38px;width:434px;height:510px;background:#fff;border-radius:3px;box-shadow:0 11px 15px -7px rgba(0,0,0,.2),0 24px 38px 3px rgba(0,0,0,.14),0 9px 46px 8px rgba(0,0,0,.12);overflow:hidden">
<div style="position:absolute;left:0;top:0;width:434px;height:39.3px;background:#00695c"></div>
</div>
<div class="t" style="left:383.90px;top:52.00px;font-size:12.00px;color:#fff;font-weight:bold;transform:scaleX(0.9814);transform-origin:0 0;">Add integration</div>
<div style="position:absolute;left:744px;top:42.9px;width:29.4px;height:29.4px;border-radius:50%;background:rgba(0,0,0,.12)"></div>
<svg class="i" style="left:750.80px;top:49.80px;width:15.80px;height:15.80px;" viewBox="0 0 24 24"><path fill="#fff" d="M12 2C6.48 2 2 6.48 2 12s4.48 10 10 10 10-4.48 10-10S17.52 2 12 2zm1 17h-2v-2h2v2zm2.07-7.75l-.9.92C13.45 12.9 13 13.5 13 15h-2v-.5c0-1.1.45-2.1 1.17-2.83l1.24-1.26c.37-.36.59-.86.59-1.41 0-1.1-.9-2-2-2s-2 .9-2 2H8c0-2.21 1.79-4 4-4s4 1.79 4 4c0 .88-.36 1.68-.93 2.25z"/></svg>
<svg class="i" style="left:780.70px;top:50.00px;width:15.40px;height:15.40px;" viewBox="0 0 24 24"><path fill="#fff" d="M19 6.41L17.59 5 12 10.59 6.41 5 5 6.41 10.59 12 5 17.59 6.41 19 12 13.41 17.59 19 19 17.590 13.41 12z"/></svg>
<div style="position:absolute;left:415.30px;top:92.3px;width:15px;height:15px;border-radius:50%;background:#00695c"></div>
<svg class="i" style="left:415px;top:92px;width:16px;height:16px" viewBox="415 92 16 16"><path d="M420.4 97.9 L423.2 96.2 L423.7 96.2 L423.7 102.9" fill="none" stroke="#fff" stroke-width="1.05"/></svg>
<div style="position:absolute;left:526.20px;top:92.3px;width:15px;height:15px;border-radius:50%;background:#757575"></div>
<div class="t" style="left:530.95px;top:95.00px;font-size:10.00px;color:#fff;font-weight:normal;">2</div>
<div style="position:absolute;left:654.80px;top:92.3px;width:15px;height:15px;border-radius:50%;background:#757575"></div>
<div class="t" style="left:659.55px;top:95.00px;font-size:10.00px;color:#fff;font-weight:normal;">3</div>
<div style="position:absolute;left:762.30px;top:92.3px;width:15px;height:15px;border-radius:50%;background:#757575"></div>
<div class="t" style="left:767.05px;top:95.00px;font-size:10.00px;color:#fff;font-weight:normal;">4</div>
<div style="position:absolute;left:435.3px;top:101.5px;width:85.7px;height:1px;background:rgba(0,0,0,.12)"></div>
<div style="position:absolute;left:546.4px;top:101.5px;width:103.1px;height:1px;background:rgba(0,0,0,.12)"></div>
<div style="position:absolute;left:674.8px;top:101.5px;width:82.8px;height:1px;background:rgba(0,0,0,.12)"></div>
<div class="t" style="left:389.50px;top:119.00px;font-size:10.50px;color:rgba(0,0,0,.75);font-weight:normal;transform:scaleX(1.0143);transform-origin:0 0;">Basic settings</div>
<div class="t" style="left:490.00px;top:120.00px;font-size:9.00px;color:rgba(0,0,0,.55);font-weight:normal;transform:scaleX(1.0301);transform-origin:0 0;">Uplink data converter</div>
<div class="t" style="left:612.40px;top:120.00px;font-size:9.00px;color:rgba(0,0,0,.55);font-weight:normal;transform:scaleX(1.0296);transform-origin:0 0;">Downlink data converter</div>
<div class="t" style="left:746.50px;top:120.00px;font-size:9.00px;color:rgba(0,0,0,.55);font-weight:normal;transform:scaleX(1.0213);transform-origin:0 0;">Connection</div>
<div style="position:absolute;left:389.4px;top:162.1px;width:400.1px;height:34.3px;background:#eef3f3;border-radius:4px 4px 0 0;border-bottom:1px solid rgba(0,0,0,.42)"></div>
<div class="t" style="left:399.70px;top:174.00px;font-size:10.60px;color:rgba(0,0,0,.6);font-weight:normal;transform:scaleX(1.0105);transform-origin:0 0;">Integration type*</div>
<div style="position:absolute;left:389.4px;top:210.8px;width:306.1px;height:33.3px;background:#eef3f3;border-radius:4px 4px 0 0;border-bottom:1px solid rgba(0,0,0,.42)"></div>
<div class="t" style="left:399.70px;top:223.00px;font-size:10.60px;color:rgba(0,0,0,.6);font-weight:normal;transform:scaleX(1.0105);transform-origin:0 0;">Name*</div>
<div style="position:absolute;left:700px;top:217px;width:88px;height:20.6px;border:1px solid #4f978e;border-radius:11px"></div>
<svg class="i" style="left:722.20px;top:222.50px;width:12.10px;height:12.10px;" viewBox="0 0 24 24"><path fill="#00695c" d="M20 8h-2.81c-.45-.78-1.07-1.45-1.82-1.96L17 4.41 15.590 3l-2.17 2.17C12.96 5.06 12.49 5 12 5c-.49 0-.96.06-1.41.17L8.41 3 7 4.41l1.62 1.63C7.88 6.55 7.26 7.22 6.81 8H4v2h2.09c-.05.33-.09.66-.09 1v1H4v2h2v1c0 .34.04.67.09 1H4v2h2.81c1.04 1.79 2.97 3 5.19 3s4.15-1.21 5.19-3H20v-2h-2.09c.05-.33.09-.66.09-1v-1h2v-2h-2v-1c0-.34-.04-.67-.09-1H20V8zm-6 8h-4v-2h4v2zm0-4h-4v-2h4v2z"/></svg>
<div class="t" style="left:737.80px;top:224.00px;font-size:8.65px;color:#00695c;font-weight:bold;transform:scaleX(0.9890);transform-origin:0 0;">15 min</div>
<div style="position:absolute;left:389.5px;top:261.80px;width:20px;height:8.4px;border-radius:4.2px;background:#ff8a65"></div>
<div style="position:absolute;left:399.8px;top:260.00px;width:12px;height:12px;border-radius:50%;background:#f4511e"></div>
<svg class="i" style="left:401px;top:261.20px;width:9.6px;height:9.6px" viewBox="0 0 24 24"><path d="M5 12.5l4.5 4.5L19 7.5" fill="none" stroke="#fff" stroke-width="3"/></svg>
<div class="t" style="left:414.30px;top:262.00px;font-size:9.00px;color:rgba(0,0,0,.8);font-weight:normal;transform:scaleX(0.9883);transform-origin:0 0;">Enable integration</div>
<div style="position:absolute;left:389.5px;top:281.60px;width:20px;height:8.4px;border-radius:4.2px;background:#ff8a65"></div>
<div style="position:absolute;left:399.8px;top:279.80px;width:12px;height:12px;border-radius:50%;background:#f4511e"></div>
<svg class="i" style="left:401px;top:281.00px;width:9.6px;height:9.6px" viewBox="0 0 24 24"><path d="M5 12.5l4.5 4.5L19 7.5" fill="none" stroke="#fff" stroke-width="3"/></svg>
<div class="t" style="left:414.30px;top:282.00px;font-size:9.00px;color:rgba(0,0,0,.8);font-weight:normal;transform:scaleX(0.9988);transform-origin:0 0;">Allow create devices or assets</div>
<div style="position:absolute;left:374.3px;top:514px;width:434px;height:1px;background:rgba(0,0,0,.12)"></div>
<div style="position:absolute;left:763.9px;top:520.7px;width:39.4px;height:22px;border-radius:3px;background:#00695c;box-shadow:0 1px 3px rgba(0,0,0,.3)"></div>
<div class="t" style="left:774.00px;top:527.00px;font-size:8.63px;color:#fff;font-weight:bold;transform:scaleX(0.9998);transform-origin:0 0;">Next</div>
<svg class="i" style="left:1130px;top:490px;width:50px;height:50px" viewBox="1130 490 50 50"><circle cx="1154.3" cy="515.9" r="19.8" fill="#00695c"/><g fill="#fff"><rect x="1146.9" y="509.7" width="16.9" height="16.1"/><rect x="1150.9" y="505.8" width="1.9" height="4"/><rect x="1157.5" y="505.8" width="1.9" height="4"/><rect x="1150.9" y="525.5" width="1.9" height="4.4"/><rect x="1157.5" y="525.5" width="1.9" height="4.4"/><rect x="1142.4" y="514.6" width="4.6" height="1.9"/><rect x="1142.4" y="519.5" width="4.6" height="1.9"/><rect x="1163.7" y="514.6" width="4.6" height="1.9"/><rect x="1163.7" y="519.5" width="4.6" height="1.9"/></g><path fill="#fff" stroke="#00695c" stroke-width="0.8" d="M1149 505.5 Q1149.5 510 1154 510.5 Q1149.5 511 1149 515.5 Q1148.5 511 1144 510.5 Q1148.5 510 1149 505.5Z"/><path fill="#fff" d="M1143.6 501.5 Q1144 505.6 1148 506 Q1144 506.4 1143.6 510.5 Q1143.2 506.4 1139.2 506 Q1143.2 505.6 1143.6 501.5Z"/><path fill="#fff" d="M1154.5 501 Q1154.8 504.1 1157.9 504.4 Q1154.8 504.7 1154.5 507.8 Q1154.2 504.7 1151.1 504.4 Q1154.2 504.1 1154.5 501Z"/><g fill="none" stroke="#3d8a80" stroke-width="0.9"><circle cx="1151.8" cy="516.7" r="1.3"/><circle cx="1158.8" cy="516.7" r="1.3"/><path d="M1153.5 520.3 Q1155.4 521.8 1157.3 520.3"/></g></svg>
<div style="position:absolute;left:370.8px;top:30.9px;width:118.2px;height:52.9px;box-sizing:border-box;border:2.75px solid #ff5a00"></div>
<div style="position:absolute;left:382.4px;top:153.2px;width:415px;height:51.8px;box-sizing:border-box;border:2.75px solid #ff5a00"></div>
<div style="position:absolute;left:552.5px;top:248.8px;width:298.7px;height:51.2px;box-sizing:border-box;border:3.2px solid #fdd55b;background:#fff2c4"></div>
<div class="t" style="left:561.00px;top:264.00px;font-size:22.40px;color:#000;font-weight:normal;transform:scaleX(1.0069);transform-origin:0 0;">Add an Integration name</div>
<svg class="i" style="left:630px;top:185px;width:40px;height:70px" viewBox="630 185 40 70"><path d="M646.9 193 L640.6 202.8 L653.9 202.8 Z" fill="#ffd54f" stroke="#ffd54f" stroke-width="1.6" stroke-linejoin="round"/><path d="M645.6 202 L651.1 202 L650.9 249.5 L646.7 249.5 Z" fill="#ffd54f"/></svg>
<div style="position:absolute;left:0;top:582px;width:1180px;height:1px;background:#f4f4f4"></div>
</body></html>
